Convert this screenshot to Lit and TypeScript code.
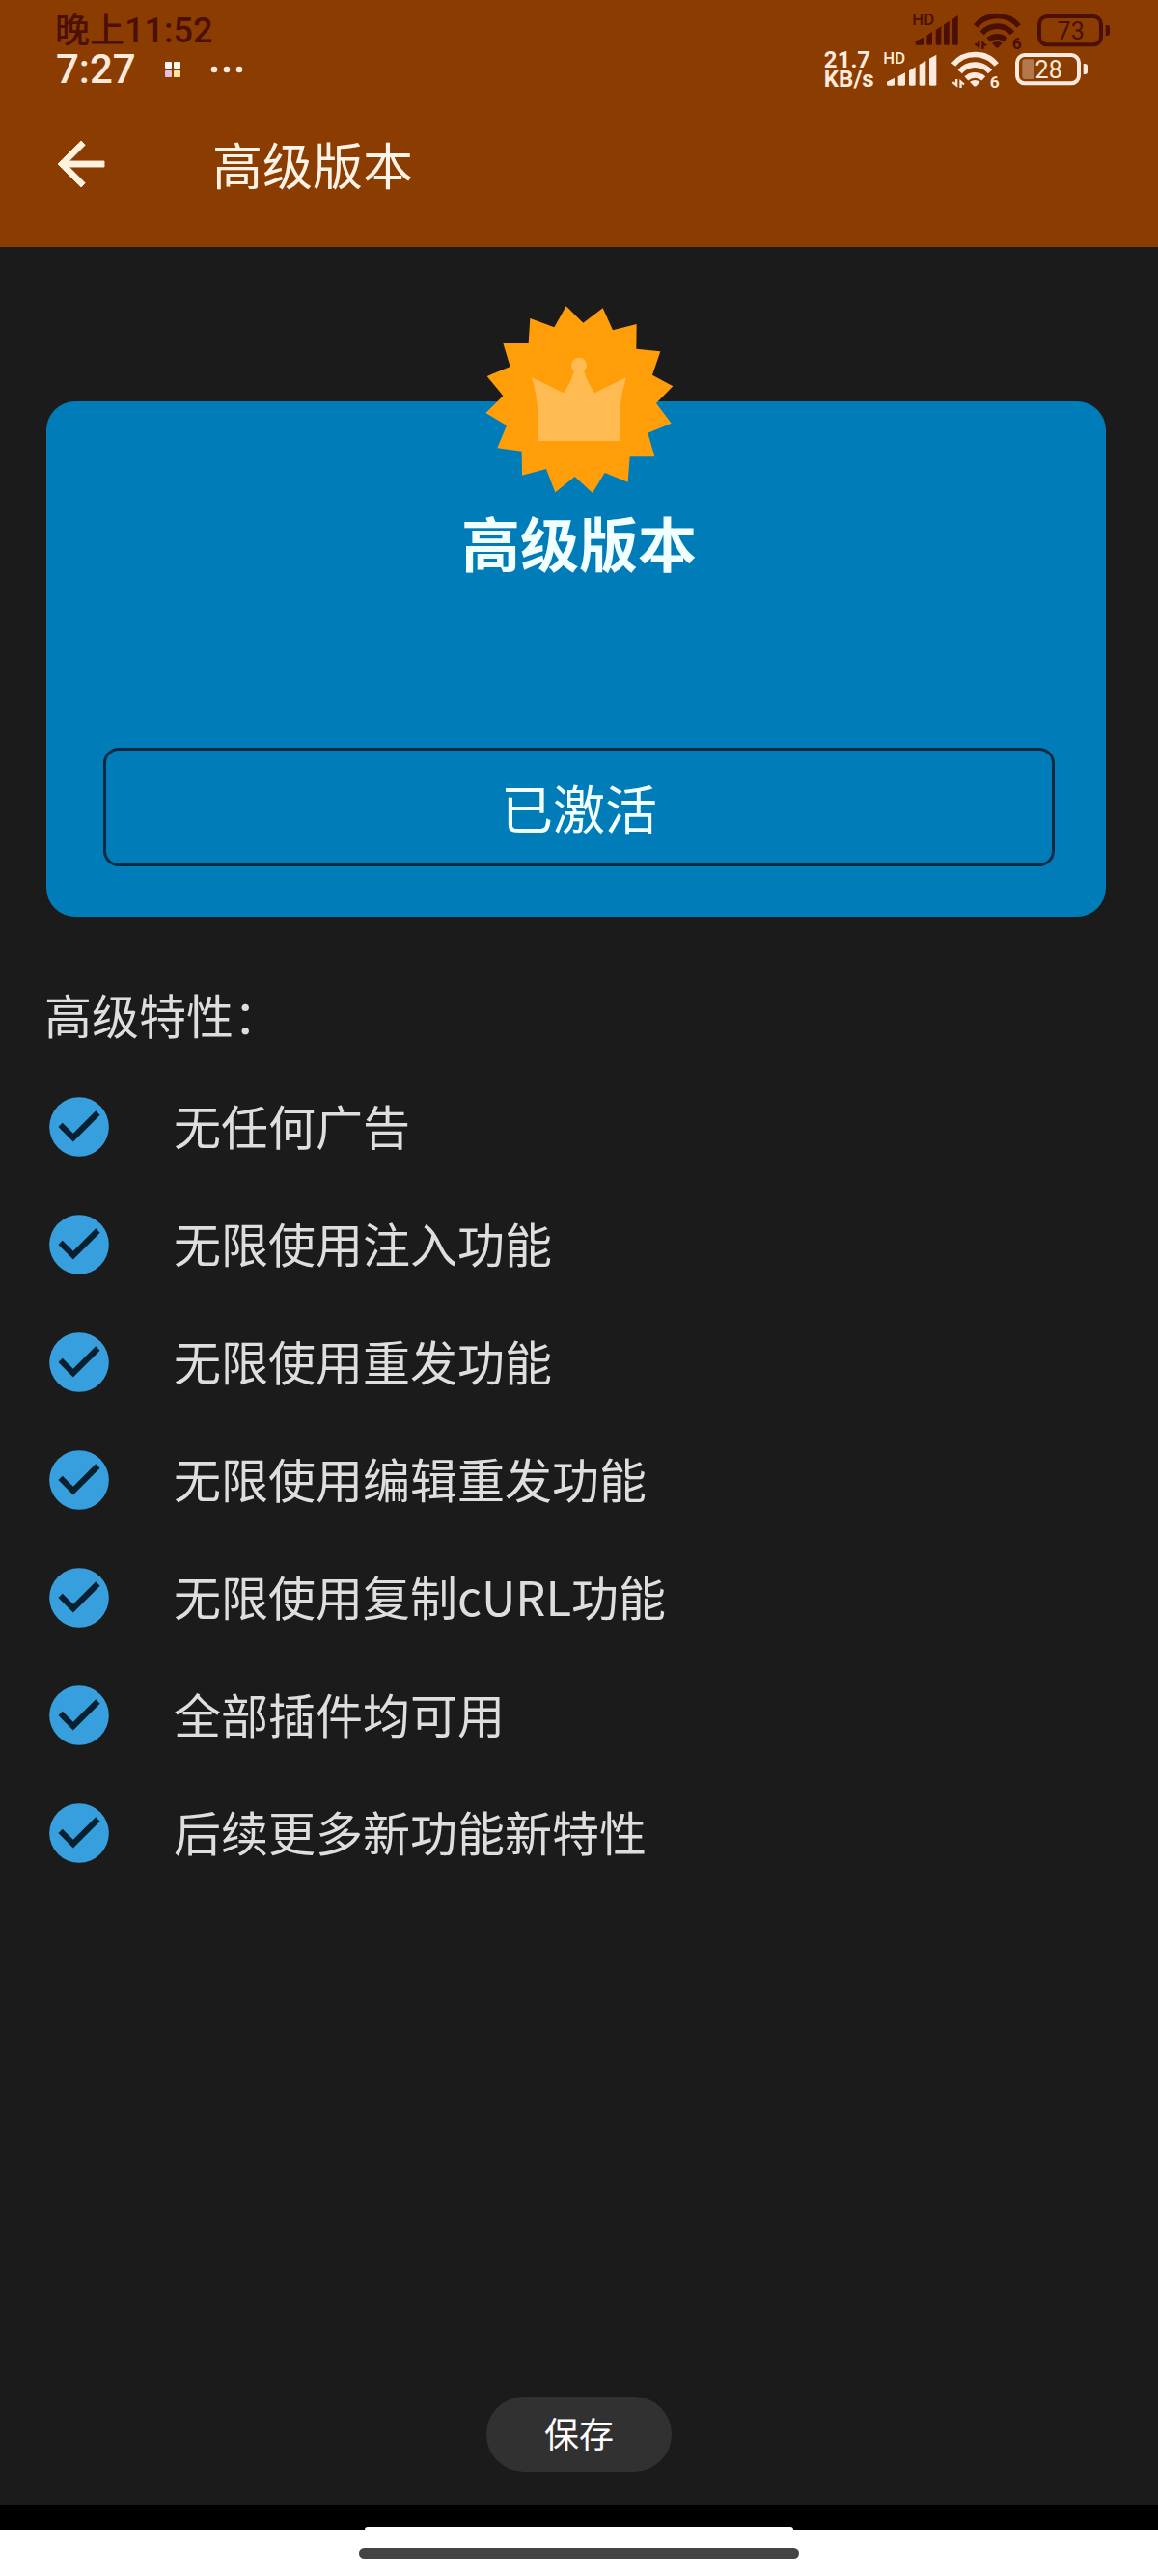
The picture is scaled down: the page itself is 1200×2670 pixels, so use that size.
import { LitElement, html, svg, css } from "lit";
import { customElement, property } from "lit/decorators.js";

type Bar = [x: number, width: number, top: number];

const GHOST_BARS: Bar[] = [[8, 25, 80], [43, 17, 62], [71, 17, 46], [96, 17, 29], [123, 17, 12]];
const LIVE_BARS: Bar[] = [[9, 24, 86], [44, 22, 70], [78, 20, 52], [110, 20, 33], [141, 22, 14]];

const FEATURES = [
  "无任何广告",
  "无限使用注入功能",
  "无限使用重发功能",
  "无限使用编辑重发功能",
  "无限使用复制cURL功能",
  "全部插件均可用",
  "后续更多新功能新特性",
];

@customElement("status-icons")
export class StatusIcons extends LitElement {
  @property({ attribute: false }) bars: Bar[] = LIVE_BARS;
  @property({ type: Number }) bottom = 110;
  @property({ type: Number }) level = 0;
  @property({ type: Number }) charge = 0;

  static styles = css`
    :host {
      display: flex;
      align-items: center;
      gap: 16px;
      height: 40px;
    }
    svg {
      display: block;
      height: 40px;
      fill: currentColor;
      overflow: visible;
    }
    text {
      font-family: Roboto, sans-serif;
    }
    .hd {
      font-size: 50px;
      font-weight: 500;
    }
    .six {
      font-size: 52px;
      font-weight: 700;
    }
    .level {
      font-size: 75px;
      font-weight: 400;
      text-anchor: middle;
    }
    .line {
      fill: none;
      stroke: currentColor;
      stroke-width: 17;
    }
    .case {
      fill: none;
      stroke: currentColor;
      stroke-width: 12;
    }
    .charge {
      opacity: 0.35;
    }
  `;

  render() {
    const last = this.bars[this.bars.length - 1];
    const width = last[0] + last[1];
    return html`
      <svg viewBox="0 0 ${width} 120" aria-label="信号">
        <text class="hd" x="-2" y="41">HD</text>
        ${this.bars.map(
          ([x, w, top]) => svg`<path
            d="M${x} ${top + 12}L${x + w} ${top}V${this.bottom - 4}q0 4-4 4H${x + 4}q-4 0-4-4z" />`
        )}
      </svg>
      <svg viewBox="0 0 150 120" aria-label="无线网络">
        <path class="line" d="M6 45A87 87 0 0 1 140 45M26 67A62 62 0 0 1 120 67M46 88A40 40 0 0 1 100 88" />
        <path d="M57 98Q73 88 89 98L78 110Q73 115 68 110z" />
        <path d="M12 90h7v26l-17-14 4-5 6 4zM25 117V90l16 14-4 5-5-4v12z" />
        <text class="six" x="119" y="117">6</text>
      </svg>
      <svg viewBox="0 0 225 120" aria-label="电量">
        <rect class="case" x="6" y="15" width="192" height="88" rx="24" />
        <path d="M212 42h5q8 0 8 8v17q0 8-8 8h-5z" />
        ${this.charge
          ? svg`<rect class="charge" x="22" y="28" width=${this.charge} height="62" rx="8" />`
          : null}
        <text class="level" x="104" y="86">${this.level}</text>
      </svg>
    `;
  }
}

@customElement("crown-badge")
export class CrownBadge extends LitElement {
  static styles = css`
    :host {
      display: block;
      width: 200px;
      height: 200px;
    }
    svg {
      display: block;
      width: 100%;
      height: 100%;
    }
    .star {
      fill: #ff9e09;
    }
    .crown {
      fill: #ffbb52;
    }
  `;

  render() {
    return html`
      <svg viewBox="120 75 600 600" aria-hidden="true">
        <polygon
          class="star"
          points="380,82 433,134 494,88 525,157 599,138 598,215 673,223 648,296 712,331 660,384 707,446 634,476 655,550 578,550 572,629 500,600 462,663 407,612 346,661 318,588 243,608 242,533 166,523 195,453 130,414 184,361 134,300 206,270 184,197 263,196 268,120 343,148"
        />
        <path
          class="crown"
          d="M273 303L372 352Q396 318 404 284A24 24 0 1 1 436 284Q446 320 469 352L567 303Q546 370 546 440Q546 470 550 501H290Q301 395 273 303z"
        />
      </svg>
    `;
  }
}

@customElement("app-root")
export class AppRoot extends LitElement {
  static styles = css`
    :host {
      display: flex;
      flex-direction: column;
      min-height: 100vh;
      background: #1b1b1b;
      color: #dedede;
      font-family: "Noto Sans CJK SC", sans-serif;
    }
    * {
      box-sizing: border-box;
    }
    button {
      font-family: inherit;
      margin: 0;
      padding: 0;
      border: none;
      background: none;
      cursor: pointer;
    }
    .header {
      padding-top: 12px;
      background: #8b3c00;
      color: #fff3e8;
    }
    .status {
      display: flex;
      align-items: center;
      justify-content: space-between;
      height: 40px;
      line-height: 40px;
      font-family: Roboto, "Noto Sans CJK SC", sans-serif;
      font-weight: 500;
    }
    .ghost {
      padding: 0 50px 0 57px;
      color: #4c0f04;
      font-size: 36px;
    }
    .live {
      padding: 0 73px 0 58px;
      color: #ffeadd;
      font-size: 42px;
    }
    .side {
      display: flex;
      align-items: center;
    }
    .apps {
      width: 16px;
      height: 16px;
      margin-left: 30px;
    }
    .more {
      width: 34px;
      height: 8px;
      margin-left: 31px;
      fill: currentColor;
    }
    .speed {
      margin-right: 10px;
      font-size: 24px;
      font-weight: 700;
      line-height: 20px;
    }
    .toolbar {
      display: flex;
      align-items: center;
      gap: 100px;
      height: 164px;
      padding: 0 48px 8px;
    }
    .back {
      width: 72px;
      height: 72px;
      color: #fff3e0;
    }
    .back svg {
      display: block;
      fill: currentColor;
      stroke: currentColor;
      stroke-width: 0.3;
    }
    .title {
      margin: 0;
      font-size: 52px;
      font-weight: 400;
      line-height: 72px;
    }
    .main {
      display: flex;
      flex: 1;
      flex-direction: column;
      padding: 160px 54px 34px 48px;
    }
    .card {
      display: flex;
      flex-direction: column;
      align-items: center;
      padding: 0 53px 52px 59px;
      border-radius: 30px;
      background: #007cb9;
      color: #f2ffff;
    }
    .badge {
      margin-top: -101px;
    }
    .plan {
      margin: 0;
      font-size: 61px;
      font-weight: 700;
      line-height: 94px;
    }
    .activated {
      align-self: stretch;
      height: 123px;
      margin-top: 166px;
      border: 3px solid #0b2a42;
      border-radius: 16px;
      color: inherit;
      font-size: 54px;
      line-height: 80px;
    }
    .subtitle {
      margin: 61px 0 16px -2px;
      font-size: 49px;
      font-weight: 400;
      line-height: 80px;
    }
    .features {
      margin: 0 0 0 -3px;
      padding: 0;
      list-style: none;
    }
    .feature {
      display: flex;
      align-items: center;
      gap: 61px;
      height: 122px;
      font-size: 49px;
      line-height: 72px;
    }
    .name {
      padding-bottom: 4px;
    }
    .check {
      flex: none;
      width: 74px;
      height: 74px;
    }
    .disc {
      fill: #379fdd;
    }
    .tick {
      fill: #06202f;
    }
    .save {
      align-self: center;
      width: 192px;
      height: 78px;
      margin-top: auto;
      margin-left: 6px;
      padding-bottom: 4px;
      border-radius: 39px;
      background: #313131;
      color: #fff;
      font-size: 36px;
      line-height: 52px;
    }
    .edge {
      display: flex;
      align-items: flex-end;
      justify-content: center;
      height: 26px;
      background: #000;
    }
    .sheet {
      width: 37%;
      height: 3px;
      border-radius: 3px 3px 0 0;
      background: #fff;
    }
    .nav {
      display: flex;
      justify-content: center;
      height: 48px;
      padding-top: 19px;
      background: #fff;
    }
    .handle {
      width: 38%;
      height: 11px;
      border-radius: 6px;
      background: #444;
    }
  `;

  render() {
    return html`
      <header class="header">
        <div class="status ghost">
          <span>晚上11:52</span>
          <status-icons .bars=${GHOST_BARS} bottom="104" level="73"></status-icons>
        </div>
        <div class="status live">
          <div class="side">
            <span>7:27</span>
            <svg class="apps" viewBox="0 0 16 16" aria-hidden="true">
              <rect width="7" height="7" rx="1" fill="#f4f6ff" />
              <rect x="9" width="7" height="7" rx="1" fill="#fffdf0" />
              <rect y="9" width="7" height="7" rx="1" fill="#e3c3dc" />
              <rect x="9" y="9" width="7" height="7" rx="1" fill="#fbe69a" />
            </svg>
            <svg class="more" viewBox="0 0 34 8" aria-hidden="true">
              <circle cx="4" cy="4" r="3.3" />
              <circle cx="17" cy="4" r="3.3" />
              <circle cx="30" cy="4" r="3.3" />
            </svg>
          </div>
          <div class="side">
            <div class="speed">21.7<br />KB/s</div>
            <status-icons .bars=${LIVE_BARS} bottom="110" level="28" charge="38"></status-icons>
          </div>
        </div>
        <div class="toolbar">
          <button class="back" aria-label="返回">
            <svg viewBox="0 0 24 24">
              <path d="M20 11H7.83l5.59-5.59L12 4l-8 8 8 8 1.41-1.41L7.83 13H20v-2z" />
            </svg>
          </button>
          <h1 class="title">高级版本</h1>
        </div>
      </header>
      <main class="main">
        <section class="card">
          <crown-badge class="badge"></crown-badge>
          <h2 class="plan">高级版本</h2>
          <button class="activated">已激活</button>
        </section>
        <h2 class="subtitle">高级特性：</h2>
        <ul class="features">
          ${FEATURES.map(
            (name) => html`
              <li class="feature">
                <svg class="check" viewBox="0 0 24 24" aria-hidden="true">
                  <circle class="disc" cx="12" cy="12" r="10" />
                  <path class="tick" d="M10 17l-5-5 1.41-1.41L10 14.17l7.59-7.59L19 8z" />
                </svg>
                <span class="name">${name}</span>
              </li>
            `
          )}
        </ul>
        <button class="save">保存</button>
      </main>
      <div class="edge"><div class="sheet"></div></div>
      <footer class="nav"><div class="handle"></div></footer>
    `;
  }
}
